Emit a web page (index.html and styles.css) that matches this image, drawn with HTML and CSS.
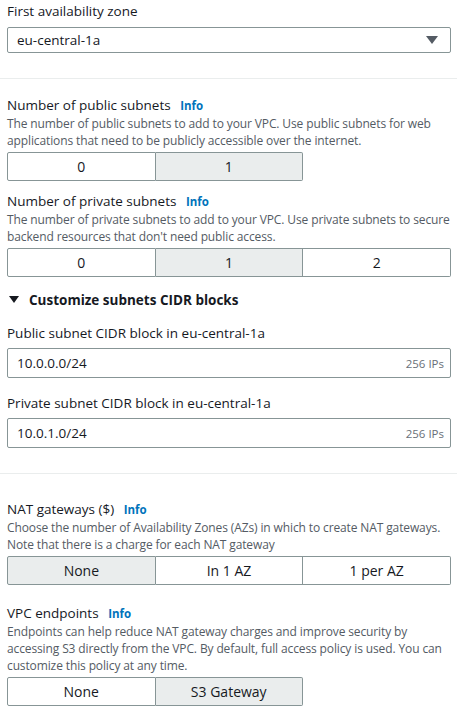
FILE: index.html
```html
<!DOCTYPE html>
<html>
<head>
<meta charset="utf-8">
<link rel="stylesheet" href="styles.css">
</head>
<body>
<div class="page">
  <section class="field first">
    <div class="label">First availability zone</div>
    <div class="select">
      <span>eu-central-1a</span>
      <svg class="caret" width="12" height="8" viewBox="0 0 12 8"><polygon points="0,0 12,0 6,8" fill="#545b64"/></svg>
    </div>
  </section>
  <hr class="divider">
  <section class="field">
    <div class="label">Number of public subnets <a class="info">Info</a></div>
    <div class="desc">The number of public subnets to add to your VPC. Use public subnets for web<br>applications that need to be publicly accessible over the internet.</div>
    <div class="seg two">
      <div class="opt">0</div>
      <div class="opt sel">1</div>
    </div>
  </section>
  <section class="field">
    <div class="label">Number of private subnets <a class="info">Info</a></div>
    <div class="desc">The number of private subnets to add to your VPC. Use private subnets to secure<br>backend resources that don't need public access.</div>
    <div class="seg three">
      <div class="opt">0</div>
      <div class="opt sel">1</div>
      <div class="opt">2</div>
    </div>
  </section>
  <div class="expander">
    <svg width="10" height="8" viewBox="0 0 10 8"><polygon points="0,0 10,0 5,7" fill="#16191f"/></svg>
    <span>Customize subnets CIDR blocks</span>
  </div>
  <section class="field cidr">
    <div class="label">Public subnet CIDR block in eu-central-1a</div>
    <div class="input"><span>10.0.0.0/24</span><span class="ips">256 IPs</span></div>
  </section>
  <section class="field cidr">
    <div class="label">Private subnet CIDR block in eu-central-1a</div>
    <div class="input"><span>10.0.1.0/24</span><span class="ips">256 IPs</span></div>
  </section>
  <hr class="divider second">
  <section class="field">
    <div class="label">NAT gateways ($) <a class="info">Info</a></div>
    <div class="desc">Choose the number of Availability Zones (AZs) in which to create NAT gateways.<br>Note that there is a charge for each NAT gateway</div>
    <div class="seg three nat">
      <div class="opt sel">None</div>
      <div class="opt">In 1 AZ</div>
      <div class="opt">1 per AZ</div>
    </div>
  </section>
  <section class="field">
    <div class="label">VPC endpoints <a class="info">Info</a></div>
    <div class="desc">Endpoints can help reduce NAT gateway charges and improve security by<br>accessing S3 directly from the VPC. By default, full access policy is used. You can<br>customize this policy at any time.</div>
    <div class="seg two">
      <div class="opt">None</div>
      <div class="opt sel">S3 Gateway</div>
    </div>
  </section>
</div>
</body>
</html>
```

FILE: styles.css
```css
* { box-sizing: border-box; }
html, body { margin: 0; padding: 0; background: #fff; }
body {
  font-family: "Open Sans", "Noto Sans", sans-serif;
  color: #16191f;
  font-size: 13px;
}
.page {
  padding: 2px 6px 0 7px;
  display: flex;
  flex-direction: column;
}
.field { display: flex; flex-direction: column; }
.label {
  font-size: 13.5px;
  line-height: 18px;
  height: 18px;
  color: #16191f;
  white-space: nowrap;
}
.info {
  color: #0073bb;
  font-weight: 700;
  font-size: 11.5px;
  line-height: 1;
  margin-left: 6px;
}
.first .label { margin-bottom: 7px; }
.select {
  height: 26px;
  border: 1px solid #879596;
  border-radius: 2px;
  display: flex;
  align-items: center;
  justify-content: space-between;
  padding: 0 12px 0 9px;
  font-size: 13.5px;
}
.caret { display: block; }
.divider {
  border: 0;
  border-top: 1px solid #eaeded;
  margin: 25px -7px 17px;
}
.desc {
  font-size: 12px;
  line-height: 17px;
  color: #545b64;
  margin-top: 1px;
  white-space: nowrap;
  letter-spacing: -0.12px;
}
.seg {
  display: flex;
  margin-top: 3px;
  height: 29px;
  margin-bottom: 11px;
}
.seg.two { width: 296px; }
.seg.three { width: 444px; }
.seg.nat { margin-bottom: 19px; }
.opt {
  flex: 1;
  border: 1px solid #879596;
  display: flex;
  align-items: center;
  justify-content: center;
  font-size: 14px;
  color: #16191f;
  background: #fff;
}
.opt + .opt { border-left: 0; }
.opt:first-child { border-radius: 2px 0 0 2px; }
.opt:last-child { border-radius: 0 2px 2px 0; }
.opt.sel { background: #eaeded; }
.expander {
  display: flex;
  align-items: center;
  gap: 10px;
  font-weight: 700;
  font-size: 13.5px;
  line-height: 18px;
  height: 18px;
  margin-top: 3px;
  margin-bottom: 15px;
  padding-left: 2px;
}
.expander svg { display: block; }
.cidr .label { margin-bottom: 6px; }
.input {
  height: 30px;
  border: 1px solid #879596;
  border-radius: 2px;
  display: flex;
  align-items: center;
  justify-content: space-between;
  padding: 0 6px 0 9px;
  font-size: 13.5px;
  margin-bottom: 16px;
}
.ips { font-size: 11.5px; color: #687078; }
.divider.second { margin: 9px -7px 26px; }
```
